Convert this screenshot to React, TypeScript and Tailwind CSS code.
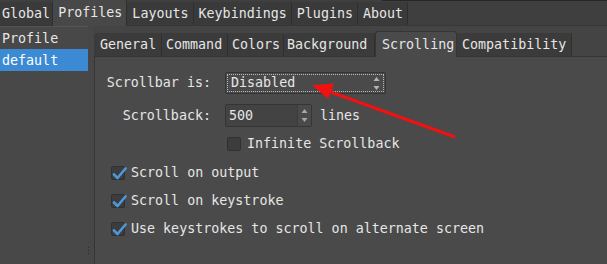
import React from "react";

function UpDown({ color = "#b4b4b4" }: { color?: string }) {
  return (
    <svg width="7" height="15" viewBox="0 0 7 15">
      <polygon points="3.5,1 6.5,5 0.5,5" fill={color} />
      <polygon points="0.5,10 6.5,10 3.5,14" fill={color} />
    </svg>
  );
}

function Check({ checked, label }: { checked: boolean; label: string }) {
  return (
    <div className="flex items-center">
      <div className="relative w-[14px] h-[14px] rounded-[2px] border border-[#303030] bg-[#3c3c3c]">
        {checked && (
          <svg
            className="absolute left-[0px] top-[-1px]"
            width="15"
            height="15"
            viewBox="0 0 15 15"
          >
            <path
              d="M2 8.5 L5.5 12 L13.5 2.5"
              fill="none"
              stroke="#4d97dd"
              strokeWidth="2.6"
              strokeLinecap="round"
              strokeLinejoin="round"
            />
          </svg>
        )}
      </div>
      <span className="ml-[6px]">{label}</span>
    </div>
  );
}

export default function App() {
  return (
    <div className="relative w-[607px] h-[264px] overflow-hidden bg-[#484848] text-[#e6e6e6] text-[13.33px] leading-none font-['DejaVu_Sans_Mono',monospace] flex flex-col">
      {/* top tab bar */}
      <div className="h-[26px] flex items-end bg-[#3f3f3f] border-b border-[#363636] shrink-0">
        <div className="h-[23px] flex items-center pl-[2px] pr-[2px] bg-[#3a3a3a] border-r border-[#2e2e2e]">Global</div>
        <div className="h-[26px] -mb-px flex items-center pl-[5px] pr-[4px] bg-[#484848] border-r border-[#2e2e2e] rounded-t-[2px]">Profiles</div>
        <div className="h-[23px] flex items-center pl-[5px] pr-[4px] bg-[#3a3a3a] border-r border-[#2e2e2e] rounded-t-[2px]">Layouts</div>
        <div className="h-[23px] flex items-center pl-[5px] pr-[4px] bg-[#3a3a3a] border-r border-[#2e2e2e] rounded-t-[2px]">Keybindings</div>
        <div className="h-[23px] flex items-center pl-[5px] pr-[4px] bg-[#3a3a3a] border-r border-[#2e2e2e] rounded-t-[2px]">Plugins</div>
        <div className="h-[23px] flex items-center pl-[5px] pr-[4px] bg-[#3a3a3a] border-r border-[#2e2e2e] rounded-t-[2px]">About</div>
      </div>

      <div className="flex flex-1">
        {/* left list */}
        <div className="w-[88px] flex flex-col bg-[#484848]">
          <div className="h-[23px] flex items-center pl-[2px] pt-px border-t border-[#545454]">Profile</div>
          <div className="h-[22px] flex items-center pl-[2px] pt-px bg-[#3b8ad3] text-white">default</div>
        </div>
        {/* splitter */}
        <div className="w-[6px] flex flex-col bg-[#474747] pb-[10px]">
          <div className="flex-1" />
          <div className="flex flex-col gap-[2px] w-px">
            <div className="w-px h-px bg-[#2c2c2c]" />
            <div className="w-px h-px bg-[#2c2c2c]" />
            <div className="w-px h-px bg-[#2c2c2c]" />
          </div>
        </div>

        {/* right side */}
        <div className="flex-1 flex flex-col">
          <div className="h-[30px] flex items-end bg-[#444444] shrink-0">
            <div className="w-[68px] h-[23px] flex items-center pl-[6px] bg-[#3b3b3b] border-r border-[#2f2f2f] rounded-t-[2px]">General</div>
            <div className="w-[66px] h-[23px] flex items-center pl-[4px] bg-[#3b3b3b] border-r border-[#2f2f2f] rounded-t-[2px]">Command</div>
            <div className="w-[56px] h-[23px] flex items-center pl-[4px] bg-[#3b3b3b] border-r border-[#2f2f2f] rounded-t-[2px]">Colors</div>
            <div className="w-[91px] h-[23px] flex items-center pl-[3px] bg-[#3b3b3b] border-r border-[#2f2f2f] rounded-t-[2px]">Background</div>
            <div className="w-[82px] h-[26px] -mb-px flex items-center pl-[6px] bg-[#4a4a4a] border border-b-0 border-[#353535] rounded-t-[3px] z-10">Scrolling</div>
            <div className="w-[115px] h-[23px] flex items-center pl-[5px] bg-[#3b3b3b] border-r border-[#2f2f2f] rounded-t-[2px]">Compatibility</div>
          </div>

          <div className="flex-1 bg-[#4a4a4a] border-l border-t border-[#363636] flex flex-col pt-[15px]">
            {/* row 1 */}
            <div className="flex items-center h-[22px]">
              <div className="w-[116px] text-right">Scrollbar is:</div>
              <div className="ml-[14px] w-[161px] h-[22px] border border-[#353535] rounded-[2px] bg-[#4a4a4a] p-px">
                <div className="h-full border border-dotted border-[#b8b8b8] flex items-center justify-between pl-[3px] pr-[3px]">
                  <span>Disabled</span>
                  <UpDown />
                </div>
              </div>
            </div>
            {/* row 2 */}
            <div className="flex items-center h-[23px] mt-[10px]">
              <div className="w-[116px] text-right">Scrollback:</div>
              <div className="ml-[14px] w-[87px] h-[23px] border border-[#353535] rounded-[2px] bg-[#434343] flex">
                <div className="flex-1 flex items-center pl-[3px]">500</div>
                <div className="w-[14px] flex items-center justify-center bg-[#4a4a4a] border-l border-[#3a3a3a]">
                  <UpDown color="#a8a8a8" />
                </div>
              </div>
              <span className="ml-[8px]">lines</span>
            </div>
            {/* row 3 */}
            <div className="flex items-center h-[20px] mt-[7px] pl-[132px]">
              <Check checked={false} label="Infinite Scrollback" />
            </div>
            {/* checkboxes */}
            <div className="flex flex-col mt-[5px] pl-[16px]">
              <div className="h-[28px] flex items-center">
                <Check checked label="Scroll on output" />
              </div>
              <div className="h-[28px] flex items-center">
                <Check checked label="Scroll on keystroke" />
              </div>
              <div className="h-[28px] flex items-center">
                <Check checked label="Use keystrokes to scroll on alternate screen" />
              </div>
            </div>
          </div>
        </div>
      </div>

      {/* top-right dark edge */}
      <div className="absolute top-0 left-[382px] right-0 h-px bg-[#262626]" />

      {/* red annotation arrow */}
      <svg className="absolute left-0 top-0 pointer-events-none" width="607" height="264" viewBox="0 0 607 264">
        <line x1="455" y1="137" x2="328" y2="91" stroke="#f21111" strokeWidth="3" />
        <polygon points="312,85 334,83.5 328,99" fill="#f21111" />
      </svg>
    </div>
  );
}
